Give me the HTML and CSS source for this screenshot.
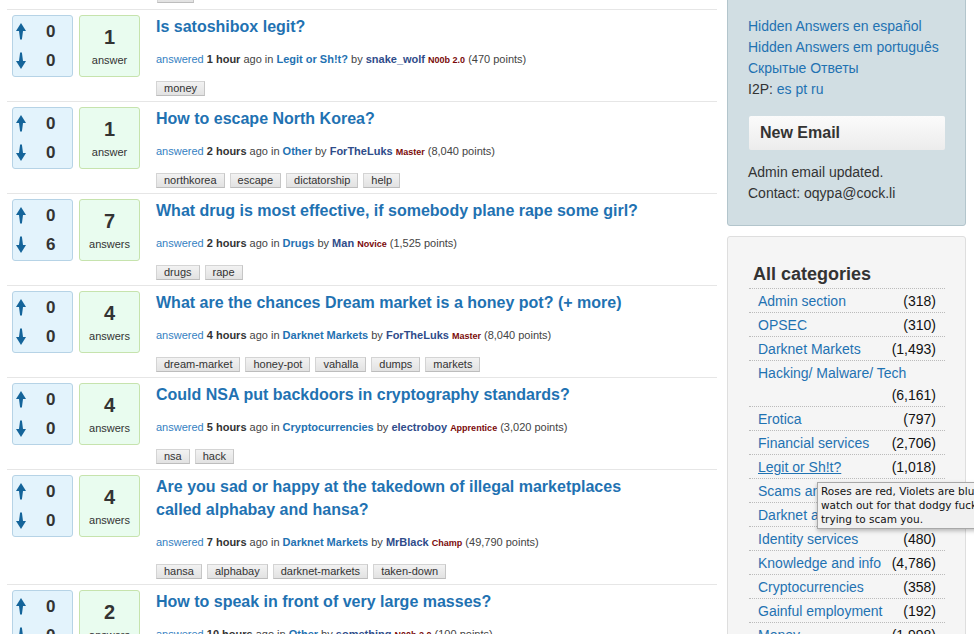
FILE: index.html
```html
<!DOCTYPE html>
<html>
<head>
<meta charset="utf-8">
<link rel="stylesheet" href="styles.css">
</head>
<body>
<div class="page">
  <div class="main">
    <div class="prev-tail"><span class="tag tag-stub"></span></div>

    <div class="q-item">
      <div class="stats">
        <div class="votes">
          <div class="vrow"><svg class="arrow" viewBox="0 0 10 17"><path d="M5 0 L10 8 L7 8 L5.9 16.5 L4.1 16.5 L3 8 L0 8 Z"/></svg><span class="vnum">0</span></div>
          <div class="vrow"><svg class="arrow" viewBox="0 0 10 17"><path d="M5 17 L10 9 L7 9 L5.9 0.5 L4.1 0.5 L3 9 L0 9 Z"/></svg><span class="vnum">0</span></div>
        </div>
        <div class="acount"><span class="anum">1</span><span class="alabel">answer</span></div>
      </div>
      <div class="q-main">
        <a class="q-title">Is satoshibox legit?</a>
        <div class="meta"><span class="what">answered</span> <b>1 hour</b> ago in <a class="cat">Legit or Sh!t?</a> by <a class="user">snake_wolf</a> <span class="level">N00b 2.0</span> (470 points)</div>
        <div class="tags"><span class="tag">money</span></div>
      </div>
    </div>

    <div class="q-item">
      <div class="stats">
        <div class="votes">
          <div class="vrow"><svg class="arrow" viewBox="0 0 10 17"><path d="M5 0 L10 8 L7 8 L5.9 16.5 L4.1 16.5 L3 8 L0 8 Z"/></svg><span class="vnum">0</span></div>
          <div class="vrow"><svg class="arrow" viewBox="0 0 10 17"><path d="M5 17 L10 9 L7 9 L5.9 0.5 L4.1 0.5 L3 9 L0 9 Z"/></svg><span class="vnum">0</span></div>
        </div>
        <div class="acount"><span class="anum">1</span><span class="alabel">answer</span></div>
      </div>
      <div class="q-main">
        <a class="q-title">How to escape North Korea?</a>
        <div class="meta"><span class="what">answered</span> <b>2 hours</b> ago in <a class="cat">Other</a> by <a class="user">ForTheLuks</a> <span class="level">Master</span> (8,040 points)</div>
        <div class="tags"><span class="tag">northkorea</span><span class="tag">escape</span><span class="tag">dictatorship</span><span class="tag">help</span></div>
      </div>
    </div>

    <div class="q-item">
      <div class="stats">
        <div class="votes">
          <div class="vrow"><svg class="arrow" viewBox="0 0 10 17"><path d="M5 0 L10 8 L7 8 L5.9 16.5 L4.1 16.5 L3 8 L0 8 Z"/></svg><span class="vnum">0</span></div>
          <div class="vrow"><svg class="arrow" viewBox="0 0 10 17"><path d="M5 17 L10 9 L7 9 L5.9 0.5 L4.1 0.5 L3 9 L0 9 Z"/></svg><span class="vnum">6</span></div>
        </div>
        <div class="acount"><span class="anum">7</span><span class="alabel">answers</span></div>
      </div>
      <div class="q-main">
        <a class="q-title">What drug is most effective, if somebody plane rape some girl?</a>
        <div class="meta"><span class="what">answered</span> <b>2 hours</b> ago in <a class="cat">Drugs</a> by <a class="user">Man</a> <span class="level">Novice</span> (1,525 points)</div>
        <div class="tags"><span class="tag">drugs</span><span class="tag">rape</span></div>
      </div>
    </div>

    <div class="q-item">
      <div class="stats">
        <div class="votes">
          <div class="vrow"><svg class="arrow" viewBox="0 0 10 17"><path d="M5 0 L10 8 L7 8 L5.9 16.5 L4.1 16.5 L3 8 L0 8 Z"/></svg><span class="vnum">0</span></div>
          <div class="vrow"><svg class="arrow" viewBox="0 0 10 17"><path d="M5 17 L10 9 L7 9 L5.9 0.5 L4.1 0.5 L3 9 L0 9 Z"/></svg><span class="vnum">0</span></div>
        </div>
        <div class="acount"><span class="anum">4</span><span class="alabel">answers</span></div>
      </div>
      <div class="q-main">
        <a class="q-title">What are the chances Dream market is a honey pot? (+ more)</a>
        <div class="meta"><span class="what">answered</span> <b>4 hours</b> ago in <a class="cat">Darknet Markets</a> by <a class="user">ForTheLuks</a> <span class="level">Master</span> (8,040 points)</div>
        <div class="tags"><span class="tag">dream-market</span><span class="tag">honey-pot</span><span class="tag">vahalla</span><span class="tag">dumps</span><span class="tag">markets</span></div>
      </div>
    </div>

    <div class="q-item">
      <div class="stats">
        <div class="votes">
          <div class="vrow"><svg class="arrow" viewBox="0 0 10 17"><path d="M5 0 L10 8 L7 8 L5.9 16.5 L4.1 16.5 L3 8 L0 8 Z"/></svg><span class="vnum">0</span></div>
          <div class="vrow"><svg class="arrow" viewBox="0 0 10 17"><path d="M5 17 L10 9 L7 9 L5.9 0.5 L4.1 0.5 L3 9 L0 9 Z"/></svg><span class="vnum">0</span></div>
        </div>
        <div class="acount"><span class="anum">4</span><span class="alabel">answers</span></div>
      </div>
      <div class="q-main">
        <a class="q-title">Could NSA put backdoors in cryptography standards?</a>
        <div class="meta"><span class="what">answered</span> <b>5 hours</b> ago in <a class="cat">Cryptocurrencies</a> by <a class="user">electroboy</a> <span class="level">Apprentice</span> (3,020 points)</div>
        <div class="tags"><span class="tag">nsa</span><span class="tag">hack</span></div>
      </div>
    </div>

    <div class="q-item">
      <div class="stats">
        <div class="votes">
          <div class="vrow"><svg class="arrow" viewBox="0 0 10 17"><path d="M5 0 L10 8 L7 8 L5.9 16.5 L4.1 16.5 L3 8 L0 8 Z"/></svg><span class="vnum">0</span></div>
          <div class="vrow"><svg class="arrow" viewBox="0 0 10 17"><path d="M5 17 L10 9 L7 9 L5.9 0.5 L4.1 0.5 L3 9 L0 9 Z"/></svg><span class="vnum">0</span></div>
        </div>
        <div class="acount"><span class="anum">4</span><span class="alabel">answers</span></div>
      </div>
      <div class="q-main">
        <a class="q-title">Are you sad or happy at the takedown of illegal marketplaces called alphabay and hansa?</a>
        <div class="meta"><span class="what">answered</span> <b>7 hours</b> ago in <a class="cat">Darknet Markets</a> by <a class="user">MrBlack</a> <span class="level">Champ</span> (49,790 points)</div>
        <div class="tags"><span class="tag">hansa</span><span class="tag">alphabay</span><span class="tag">darknet-markets</span><span class="tag">taken-down</span></div>
      </div>
    </div>

    <div class="q-item">
      <div class="stats">
        <div class="votes">
          <div class="vrow"><svg class="arrow" viewBox="0 0 10 17"><path d="M5 0 L10 8 L7 8 L5.9 16.5 L4.1 16.5 L3 8 L0 8 Z"/></svg><span class="vnum">0</span></div>
          <div class="vrow"><svg class="arrow" viewBox="0 0 10 17"><path d="M5 17 L10 9 L7 9 L5.9 0.5 L4.1 0.5 L3 9 L0 9 Z"/></svg><span class="vnum">0</span></div>
        </div>
        <div class="acount"><span class="anum">2</span><span class="alabel">answers</span></div>
      </div>
      <div class="q-main">
        <a class="q-title">How to speak in front of very large masses?</a>
        <div class="meta"><span class="what">answered</span> <b>10 hours</b> ago in <a class="cat">Other</a> by <a class="user">something</a> <span class="level">N00b 2.0</span> (100 points)</div>
        <div class="tags"><span class="tag">speaking</span></div>
      </div>
    </div>
  </div>

  <div class="side">
    <div class="side-box">
      <div class="langs">
        <a>Hidden Answers en español</a>
        <a>Hidden Answers em português</a>
        <a>Скрытые Ответы</a>
        <div>I2P: <a>es</a> <a>pt</a> <a>ru</a></div>
      </div>
      <div class="news-head">New Email</div>
      <div class="news-text">Admin email updated.<br>Contact: oqypa@cock.li</div>
    </div>

    <div class="cat-box">
      <h2 class="cat-title">All categories</h2>
      <ul class="cat-list">
        <li><a>Admin section</a><span class="cnt">(318)</span></li>
        <li><a>OPSEC</a><span class="cnt">(310)</span></li>
        <li><a>Darknet Markets</a><span class="cnt">(1,493)</span></li>
        <li><a>Hacking/ Malware/ Tech</a><span class="cnt">(6,161)</span></li>
        <li><a>Erotica</a><span class="cnt">(797)</span></li>
        <li><a>Financial services</a><span class="cnt">(2,706)</span></li>
        <li><a class="hover">Legit or Sh!t?</a><span class="cnt">(1,018)</span></li>
        <li><a>Scams and Fraud</a><span class="cnt">(1,215)</span></li>
        <li><a>Darknet and Tor</a><span class="cnt">(2,311)</span></li>
        <li><a>Identity services</a><span class="cnt">(480)</span></li>
        <li><a>Knowledge and info</a><span class="cnt">(4,786)</span></li>
        <li><a>Cryptocurrencies</a><span class="cnt">(358)</span></li>
        <li><a>Gainful employment</a><span class="cnt">(192)</span></li>
        <li><a>Money</a><span class="cnt">(1,998)</span></li>
      </ul>
      <div class="tooltip">Roses are red, Violets are blue<br>watch out for that dodgy fucker<br>trying to scam you.</div>
    </div>
  </div>
</div>
</body>
</html>
```

FILE: styles.css
```css
html, body {
  margin: 0;
  padding: 0;
  background: #fff;
  overflow: hidden;
  height: 634px;
}
body {
  font-family: "Liberation Sans", Arial, Helvetica, sans-serif;
  color: #333;
}
a { text-decoration: none; cursor: pointer; }

.page {
  display: flex;
  align-items: flex-start;
  gap: 10px;
  padding-left: 7px;
}

.main {
  width: 710px;
  flex: none;
}

.prev-tail {
  height: 9px;
  overflow: hidden;
  padding-left: 150px;
}
.tag-stub {
  width: 21px;
  height: 13px;
  margin-top: -12px;
  vertical-align: top;
}

.q-item {
  border-top: 1px solid #e6e6e6;
  display: flex;
  padding: 5px 0 5px 5px;
}

.stats {
  display: flex;
  gap: 6px;
  flex: none;
}

.votes {
  width: 59px;
  height: 60px;
  background: #e3f3fc;
  border: 1px solid #b6d3e6;
  border-radius: 3px;
  display: flex;
  flex-direction: column;
  justify-content: center;
  gap: 11px;
}
.vrow {
  display: flex;
  align-items: center;
  padding-left: 3px;
}
.arrow {
  width: 10px;
  height: 17px;
  fill: #14649a;
  flex: none;
}
.vnum {
  font-size: 17px;
  font-weight: bold;
  color: #333;
  margin-left: 20px;
  line-height: 18px;
}

.acount {
  width: 59px;
  height: 60px;
  background: #e9fcef;
  border: 1px solid #c6e3ad;
  border-radius: 3px;
  display: flex;
  flex-direction: column;
  align-items: center;
}
.anum {
  font-size: 20px;
  font-weight: bold;
  color: #333;
  margin-top: 10px;
  line-height: 22px;
}
.alabel {
  font-size: 11px;
  color: #333;
  margin-top: 6px;
  line-height: 13px;
}

.q-main {
  margin-left: 16px;
  width: 500px;
}
.q-title {
  display: block;
  font-size: 16px;
  font-weight: bold;
  line-height: 23px;
  color: #1f72b2;
}
.meta {
  font-size: 11px;
  line-height: 16px;
  height: 16px;
  margin-top: 13px;
  color: #444;
  white-space: nowrap;
}
.meta .what { color: #3581c2; }
.meta b { color: #333; }
.meta .cat { color: #1f72b2; font-weight: bold; }
.meta .user { color: #2f4c8a; font-weight: bold; }
.meta .level { color: #7a0a0a; font-weight: bold; font-size: 9px; line-height: 1; }

.tags {
  display: flex;
  gap: 5px;
  margin-top: 14px;
}
.tag {
  display: inline-block;
  font-size: 11px;
  line-height: 13px;
  color: #333;
  padding: 0 7px;
  background: linear-gradient(#f2f2f2, #e2e2e2);
  border: 1px solid #d4d4d4;
  border-bottom-color: #bdbdbd;
  border-right-color: #c6c6c6;
}

/* sidebar */
.side {
  width: 239px;
  flex: none;
}
.side-box {
  margin-top: -10px;
  background: #d1dee3;
  border: 1px solid #b3c5cc;
  border-radius: 0 0 3px 3px;
  padding: 25px 20px 21px 20px;
  font-size: 14px;
  line-height: 21px;
}
.langs a {
  color: #1f72b2;
}
.langs > a { display: block; }
.langs > div { color: #333; }
.news-head {
  margin-top: 16px;
  margin-left: 1px;
  background: linear-gradient(#fbfbfb, #ececec);
  border-radius: 2px;
  font-size: 16px;
  font-weight: bold;
  line-height: 34px;
  padding-left: 11px;
  color: #333;
}
.news-text {
  margin-top: 12px;
  color: #333;
}

.cat-box {
  position: relative;
  margin-top: 10px;
  background: #f5f5f5;
  border: 1px solid #dedede;
  border-radius: 3px;
  padding: 20px 20px 20px 21px;
  height: 600px;
}
.cat-title {
  margin: 6px 0 0 4px;
  font-size: 18px;
  font-weight: bold;
  line-height: 22px;
  color: #333;
  padding-bottom: 3px;
}
.cat-list {
  list-style: none;
  margin: 0;
  padding: 0;
  font-size: 14px;
}
.cat-list li {
  border-top: 1px dotted #bbb;
  padding: 1px 9px 0 9px;
  line-height: 22px;
  display: flex;
  flex-wrap: wrap;
}
.cat-list a { color: #1f72b2; }
.cat-list a.hover { text-decoration: underline; }
.cat-list .cnt {
  margin-left: auto;
  padding-left: 6px;
  color: #111;
}

.tooltip {
  position: absolute;
  left: 89px;
  top: 245px;
  width: 180px;
  background: #f1f1f1;
  border: 1px solid #a8a8a8;
  box-shadow: 0 2px 4px rgba(0,0,0,0.25);
  font-family: "DejaVu Sans", sans-serif;
  font-size: 10.5px;
  line-height: 14px;
  color: #111;
  padding: 1px 3px 2px 3px;
  white-space: nowrap;
}
```
